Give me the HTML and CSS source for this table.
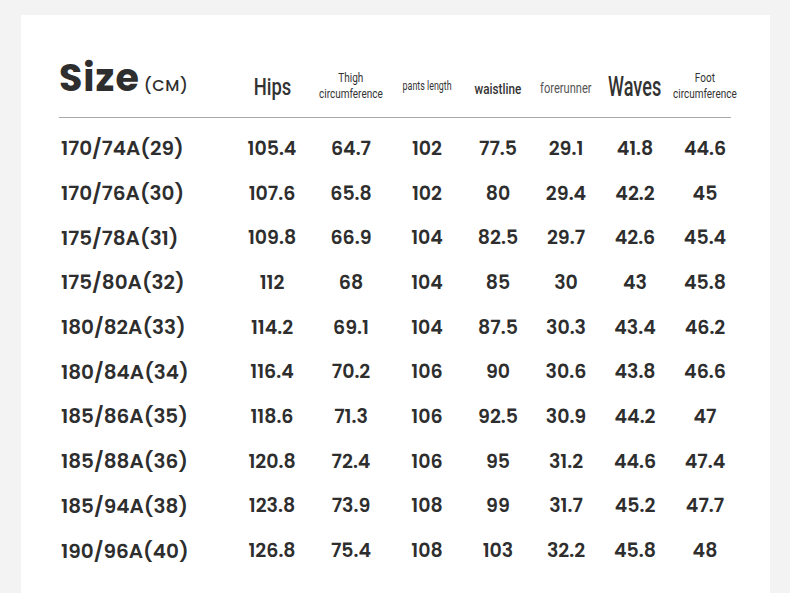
FILE: index.html
```html
<!DOCTYPE html>
<html>
<head>
<meta charset="utf-8">
<link rel="stylesheet" href="styles.css">
</head>
<body>
<div class="card">
  <div class="table">
    <div class="head">
      <div class="h-size"><span class="big">Size</span><span class="unit">(CM)</span></div>
      <div class="h h-hips"><span class="cx">Hips</span></div>
      <div class="h h-sm"><span class="cx">Thigh<br>circumference</span></div>
      <div class="h h-pants"><span class="cx">pants length</span></div>
      <div class="h h-waist"><span class="cx">waistline</span></div>
      <div class="h h-fore"><span class="cx">forerunner</span></div>
      <div class="h h-waves"><span class="cx">Waves</span></div>
      <div class="h h-sm"><span class="cx">Foot<br>circumference</span></div>
    </div>
    <div class="rule"></div>
    <div class="row"><div class="lbl">170/74A(29)</div><div>105.4</div><div>64.7</div><div>102</div><div>77.5</div><div>29.1</div><div>41.8</div><div>44.6</div></div>
    <div class="row"><div class="lbl">170/76A(30)</div><div>107.6</div><div>65.8</div><div>102</div><div>80</div><div>29.4</div><div>42.2</div><div>45</div></div>
    <div class="row"><div class="lbl">175/78A(31)</div><div>109.8</div><div>66.9</div><div>104</div><div>82.5</div><div>29.7</div><div>42.6</div><div>45.4</div></div>
    <div class="row"><div class="lbl">175/80A(32)</div><div>112</div><div>68</div><div>104</div><div>85</div><div>30</div><div>43</div><div>45.8</div></div>
    <div class="row"><div class="lbl">180/82A(33)</div><div>114.2</div><div>69.1</div><div>104</div><div>87.5</div><div>30.3</div><div>43.4</div><div>46.2</div></div>
    <div class="row"><div class="lbl">180/84A(34)</div><div>116.4</div><div>70.2</div><div>106</div><div>90</div><div>30.6</div><div>43.8</div><div>46.6</div></div>
    <div class="row"><div class="lbl">185/86A(35)</div><div>118.6</div><div>71.3</div><div>106</div><div>92.5</div><div>30.9</div><div>44.2</div><div>47</div></div>
    <div class="row"><div class="lbl">185/88A(36)</div><div>120.8</div><div>72.4</div><div>106</div><div>95</div><div>31.2</div><div>44.6</div><div>47.4</div></div>
    <div class="row"><div class="lbl">185/94A(38)</div><div>123.8</div><div>73.9</div><div>108</div><div>99</div><div>31.7</div><div>45.2</div><div>47.7</div></div>
    <div class="row"><div class="lbl">190/96A(40)</div><div>126.8</div><div>75.4</div><div>108</div><div>103</div><div>32.2</div><div>45.8</div><div>48</div></div>
  </div>
</div>
</body>
</html>
```
FILE: styles.css
```css
html, body {
  margin: 0;
  padding: 0;
  background: #f3f3f3;
  height: 593px;
  overflow: hidden;
}
.card {
  margin: 15px 0 0 21px;
  width: 749px;
  height: 600px;
  background: #ffffff;
  padding: 0 0 0 38px;
  box-sizing: border-box;
  color: #2f2f2f;
}
.table {
  width: 681px;
}
.head, .row {
  display: grid;
  grid-template-columns: 173px 80px 78px 74px 68px 68px 70px 70px;
}
.head {
  height: 102px;
  align-items: end;
  padding-bottom: 15px;
  box-sizing: border-box;
}
.h {
  display: flex;
  justify-content: center;
  text-align: center;
  font-family: "Roboto", "Noto Sans", sans-serif;
  color: #333;
  white-space: nowrap;
}
.cx {
  display: inline-block;
  transform: scaleX(0.8);
}
.h-size {
  font-family: "Poppins", "Inter", "Noto Sans", sans-serif;
  color: #2e2e2e;
  white-space: nowrap;
  line-height: 48px;
  padding-bottom: 0;
  position: relative;
  top: 8px;
}
.big {
  font-size: 38px;
  font-weight: 700;
  letter-spacing: 1px;
}
.unit {
  font-size: 16px;
  font-weight: 500;
  margin-left: 4px;
  letter-spacing: 0.6px;
}
.h-hips {
  font-size: 23px;
  line-height: 28px;
  font-weight: 500;
  padding-bottom: 0;
}
.h-hips .cx { transform: scaleX(0.8); }
.h-sm {
  font-size: 12.5px;
  line-height: 16px;
  padding-bottom: 0;
}
.h-pants {
  padding-bottom: 8px;
  font-size: 12px;
  line-height: 16px;
}
.h-pants .cx { transform: scaleX(0.74); }
.h-waist {
  font-size: 15px;
  line-height: 20px;
  font-weight: 500;
  padding-bottom: 3px;
}
.h-waist .cx { transform: scaleX(0.78); }
.h-fore {
  font-size: 15px;
  line-height: 20px;
  padding-bottom: 4px;
  color: #555;
}
.h-fore .cx { transform: scaleX(0.74); }
.h-waves {
  font-size: 27px;
  line-height: 30px;
  font-weight: 500;
  padding-bottom: 0;
}
.h-waves .cx { transform: scaleX(0.67); }
.rule {
  width: 672px;
  height: 1px;
  background: #a8a8a8;
  margin-bottom: 8px;
}
.row {
  height: 44.7px;
  align-items: center;
  font-family: "Poppins", "Inter", "Noto Sans", sans-serif;
  font-weight: 600;
  font-size: 19px;
  text-align: center;
  color: #2e2e2e;
}
.row .lbl {
  text-align: left;
  font-size: 20px;
  padding-left: 2px;
}
```
